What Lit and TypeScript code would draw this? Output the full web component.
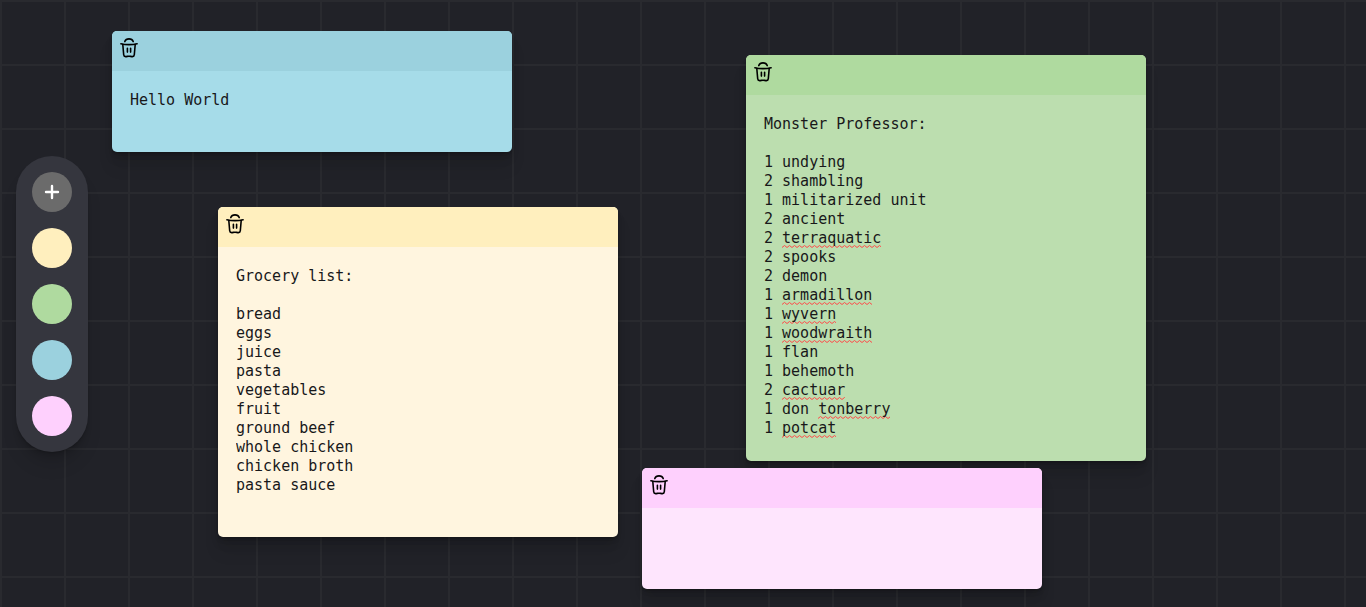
import { LitElement, html, css, svg } from "lit";
import { customElement, property } from "lit/decorators.js";
import { styleMap } from "lit/directives/style-map.js";

interface Note {
  color: "blue" | "yellow" | "green" | "purple";
  x: number;
  y: number;
  rows: number;
  text: string;
  flagged?: string[];
}

const NOTES: Note[] = [
  { color: "blue", x: 112, y: 31, rows: 2, text: "Hello World" },
  {
    color: "yellow",
    x: 218,
    y: 207,
    rows: 13,
    text: [
      "Grocery list:", "", "bread", "eggs", "juice", "pasta", "vegetables", "fruit",
      "ground beef", "whole chicken", "chicken broth", "pasta sauce",
    ].join("\n"),
  },
  {
    color: "green",
    x: 746,
    y: 55,
    rows: 17,
    text: [
      "Monster Professor:", "", "1 undying", "2 shambling", "1 militarized unit", "2 ancient",
      "2 terraquatic", "2 spooks", "2 demon", "1 armadillon", "1 wyvern", "1 woodwraith",
      "1 flan", "1 behemoth", "2 cactuar", "1 don tonberry", "1 potcat",
    ].join("\n"),
    flagged: ["terraquatic", "armadillon", "wyvern", "woodwraith", "cactuar", "tonberry", "potcat"],
  },
  { color: "purple", x: 642, y: 468, rows: 2, text: "" },
];

const palette = css`
  .yellow { --head: #ffefbe; --body: #fff5df; }
  .green { --head: #afda9f; --body: #bcdeaf; }
  .blue { --head: #9bd1de; --body: #a6dce9; }
  .purple { --head: #fed0fd; --body: #fee5fd; }
`;

const shadow = css`
  .raised {
    box-shadow:
      0 1px 1px rgb(0 0 0 / 0.075),
      0 2px 2px rgb(0 0 0 / 0.075),
      0 4px 4px rgb(0 0 0 / 0.075),
      0 8px 8px rgb(0 0 0 / 0.075),
      0 16px 16px rgb(0 0 0 / 0.075);
  }
`;

const trashShape = svg`
  <path d="M7.800 5.600C8.400 3.900 9.800 2.900 12 2.900s3.600 1 4.200 2.700" />
  <path d="M3.900 7.700c2.400.6 5.100.9 8.100.9s5.700-.3 8.100-.9" />
  <path d="M5.800 8.500 6.700 18.800c.1 1.200.7 1.800 1.900 1.800 1.200 0 2.100-.4 3.400-.4s2.200.4 3.400.4c1.200 0 1.800-.6 1.900-1.800L18.200 8.500" />
  <path d="M10.400 12.200v3.900M13.600 12.200v3.900" />
`;

@customElement("sticky-note")
export class StickyNote extends LitElement {
  @property({ attribute: false }) note!: Note;

  static styles = [
    palette,
    shadow,
    css`
      :host { display: block; }
      .card {
        border-radius: 5px;
        background: var(--body);
        overflow: hidden;
      }
      .header {
        display: flex;
        padding: 5px;
        height: 30px;
        background: var(--head);
        cursor: grab;
      }
      .trash {
        display: block;
        width: 24px;
        height: 24px;
        padding: 0;
        border: 0;
        background: none;
        color: #000;
        cursor: pointer;
      }
      .trash svg {
        display: block;
        fill: none;
        stroke: currentColor;
        stroke-width: 1.6;
        stroke-linecap: round;
        stroke-linejoin: round;
      }
      .body {
        display: grid;
        padding: 20px 18px 23px;
        font: 15px/19px "DejaVu Sans Mono", monospace;
        color: #18181a;
      }
      .text, .marks { grid-area: 1 / 1; }
      .text {
        display: block;
        width: 100%;
        box-sizing: border-box;
        margin: 0;
        padding: 0;
        border: 0;
        outline: 0;
        resize: none;
        overflow: hidden;
        background: transparent;
        font: inherit;
        color: inherit;
      }
      .marks { pointer-events: none; }
      .line { display: flex; height: 19px; align-items: flex-end; }
      .wave {
        height: 3px;
        background: url("data:image/svg+xml,%3Csvg xmlns='http://www.w3.org/2000/svg' width='5' height='3'%3E%3Cpath d='M-1 1.700L0 2.500 2.500 .5 5 2.500 6 1.700' fill='none' stroke='%23ff4848'/%3E%3C/svg%3E") repeat-x;
      }
    `,
  ];

  private renderMarks() {
    const flagged = this.note.flagged;
    if (!flagged) return null;
    return html`<div class="marks" aria-hidden="true">
      ${this.note.text.split("\n").map((line) => {
        const word = flagged.find((w) => line.includes(w));
        return html`<div class="line">
          ${word
            ? html`<span
                class="wave"
                style=${styleMap({
                  marginLeft: `${line.indexOf(word)}ch`,
                  width: `${word.length}ch`,
                })}
              ></span>`
            : null}
        </div>`;
      })}
    </div>`;
  }

  render() {
    const { color, rows, text } = this.note;
    return html`<article class="card raised ${color}">
      <div class="header">
        <button class="trash" type="button" aria-label="Delete note">
          <svg viewBox="0 0 24 24" width="24" height="24" aria-hidden="true">${trashShape}</svg>
        </button>
      </div>
      <div class="body">
        ${this.renderMarks()}
        <textarea class="text" aria-label="Note text" spellcheck="false" rows=${rows} .value=${text}></textarea>
      </div>
    </article>`;
  }
}

@customElement("app-root")
export class AppRoot extends LitElement {
  static styles = [
    palette,
    shadow,
    css`
      :host { display: block; }
      .board {
        position: relative;
        min-height: 100vh;
        overflow: hidden;
        background-color: #212228;
        background-image:
          linear-gradient(#292a2f 2px, transparent 2px),
          linear-gradient(90deg, #292a2f 2px, transparent 2px);
        background-size: 64px 64px;
      }
      .note { position: absolute; width: 400px; }
      .dock {
        position: fixed;
        inset: 0 auto 0 16px;
        display: flex;
        align-items: center;
      }
      .controls {
        display: flex;
        flex-direction: column;
        gap: 16px;
        padding: 16px;
        border-radius: 40px;
        background: #35363e;
      }
      .round {
        display: flex;
        align-items: center;
        justify-content: center;
        width: 40px;
        height: 40px;
        padding: 0;
        border: 0;
        border-radius: 50%;
        background: var(--head);
        cursor: pointer;
      }
      .add { background: #6b6b6b; }
      .add svg {
        fill: none;
        stroke: #fff;
        stroke-width: 2.4;
        stroke-linecap: round;
      }
    `,
  ];

  render() {
    return html`<main class="board">
      ${NOTES.map(
        (note) => html`<sticky-note
          class="note"
          .note=${note}
          style=${styleMap({ left: `${note.x}px`, top: `${note.y}px` })}
        ></sticky-note>`,
      )}
      <div class="dock">
        <div class="controls raised">
          <button class="round add" type="button" aria-label="Add note">
            <svg viewBox="0 0 24 24" width="24" height="24" aria-hidden="true"><path d="M12 6v12M6 12h12" /></svg>
          </button>
          ${["yellow", "green", "blue", "purple"].map(
            (c) => html`<button class="round ${c}" type="button" aria-label="Use ${c}"></button>`,
          )}
        </div>
      </div>
    </main>`;
  }
}
